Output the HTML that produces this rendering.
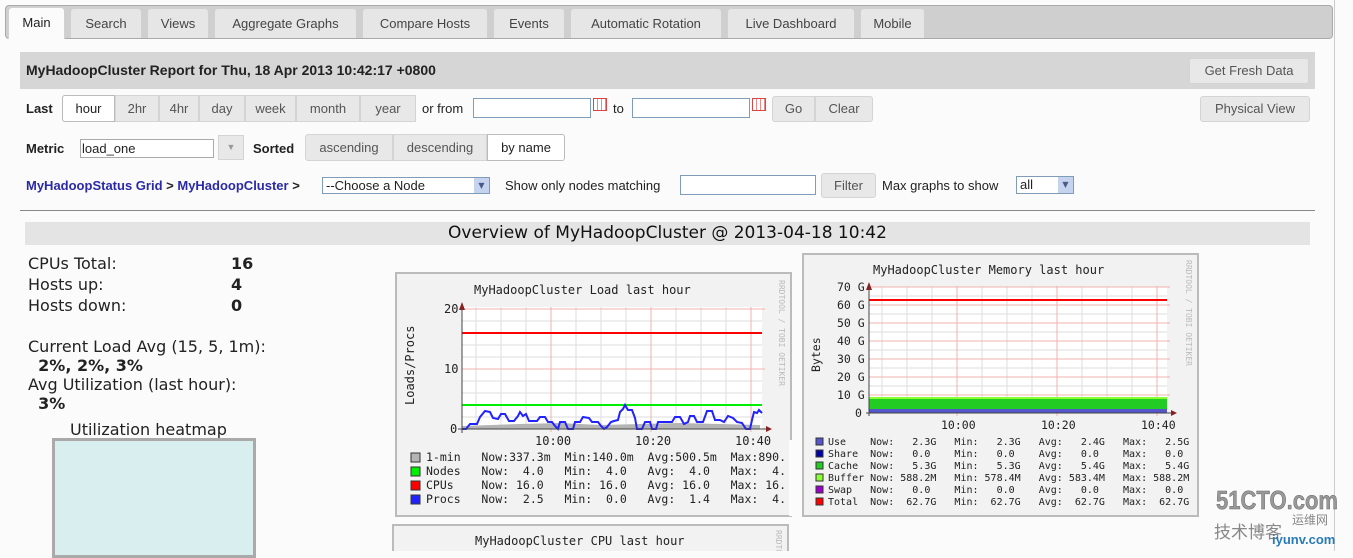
<!DOCTYPE html>
<html><head><meta charset="utf-8"><style>
*{box-sizing:border-box}
body{margin:0;width:1353px;height:551px;overflow:hidden;background:#fbfbfb;font-family:"DejaVu Sans","Liberation Sans",sans-serif;font-size:13px;color:#222;position:relative}
.a{position:absolute;white-space:nowrap}
.tabbar{left:5px;top:5px;width:1328px;height:34px;background:#cfcfcf;border:1px solid #aaa;border-radius:4px}
.tab{position:absolute;top:8px;height:30px;background:#e6e6e6;border:1px solid #d0d0d0;border-bottom:none;border-radius:4px 4px 0 0;font-size:13px;color:#444;text-align:center;line-height:29px;font-family:"Liberation Sans",sans-serif}
.tab.on{background:#fbfbfb;color:#222;top:7px;height:32px}
.btn{position:absolute;background:#e8e8e8;border:1px solid #d4d4d4;color:#555;text-align:center;font-family:"Liberation Sans",sans-serif;font-size:13px}
.inp{position:absolute;background:#fff;border:1px solid #7f9db9}
b{font-weight:bold}
.lk{color:#2a2aa8;font-weight:bold}
svg text{white-space:pre}
</style></head><body>
<div class="a tabbar"></div>
<div class="tab on" style="left:8px;width:57px">Main</div>
<div class="tab" style="left:70px;width:72px">Search</div>
<div class="tab" style="left:147px;width:62px">Views</div>
<div class="tab" style="left:214px;width:143px">Aggregate Graphs</div>
<div class="tab" style="left:362px;width:126px">Compare Hosts</div>
<div class="tab" style="left:493px;width:72px">Events</div>
<div class="tab" style="left:570px;width:152px">Automatic Rotation</div>
<div class="tab" style="left:727px;width:128px">Live Dashboard</div>
<div class="tab" style="left:860px;width:65px">Mobile</div>
<div class="a" style="left:1334px;top:0;width:1px;height:551px;background:#ccc"></div>

<div class="a" style="left:20px;top:52px;width:1295px;height:37px;background:#d6d6d6"></div>
<div class="a" style="left:26px;top:62px;font-size:14px;font-weight:bold;font-family:'Liberation Sans',sans-serif">MyHadoopCluster Report for Thu, 18 Apr 2013 10:42:17 +0800</div>
<div class="btn" style="left:1189px;top:58px;width:120px;height:26px;line-height:24px;border-radius:3px">Get Fresh Data</div>

<div class="a" style="left:26px;top:101px;font-weight:bold;font-family:'Liberation Sans',sans-serif;font-size:13px">Last</div>
<div class="btn" style="left:62px;top:95px;width:354px;height:27px;border-radius:3px"></div>
<div class="btn" style="left:62px;top:95px;width:53px;height:27px;line-height:25px;background:#fff;color:#222;border-color:#bbb;border-radius:3px 0 0 3px">hour</div>
<div class="btn" style="left:115px;top:95px;width:44px;height:27px;line-height:25px">2hr</div>
<div class="btn" style="left:159px;top:95px;width:40px;height:27px;line-height:25px">4hr</div>
<div class="btn" style="left:199px;top:95px;width:46px;height:27px;line-height:25px">day</div>
<div class="btn" style="left:245px;top:95px;width:51px;height:27px;line-height:25px">week</div>
<div class="btn" style="left:296px;top:95px;width:64px;height:27px;line-height:25px">month</div>
<div class="btn" style="left:360px;top:95px;width:56px;height:27px;line-height:25px">year</div>
<div class="a" style="left:422px;top:101px;font-family:'Liberation Sans',sans-serif">or from</div>
<div class="inp" style="left:473px;top:98px;width:118px;height:20px"></div>
<div class="a" style="left:593px;top:98px;width:14px;height:13px;border:1px solid #d44;background:repeating-linear-gradient(90deg,#fff 0 3px,#e88 3px 4px)"></div>
<div class="a" style="left:613px;top:101px;font-family:'Liberation Sans',sans-serif">to</div>
<div class="inp" style="left:632px;top:98px;width:118px;height:20px"></div>
<div class="a" style="left:752px;top:98px;width:14px;height:13px;border:1px solid #d44;background:repeating-linear-gradient(90deg,#fff 0 3px,#e88 3px 4px)"></div>
<div class="btn" style="left:772px;top:96px;width:43px;height:26px;line-height:24px;border-radius:3px 0 0 3px">Go</div>
<div class="btn" style="left:815px;top:96px;width:58px;height:26px;line-height:24px;border-radius:0 3px 3px 0">Clear</div>
<div class="btn" style="left:1200px;top:96px;width:110px;height:26px;line-height:24px;border-radius:3px">Physical View</div>

<div class="a" style="left:26px;top:141px;font-weight:bold;font-family:'Liberation Sans',sans-serif">Metric</div>
<div class="inp" style="left:80px;top:139px;width:134px;height:19px;border-color:#aaa;font-family:'Liberation Sans',sans-serif;padding-left:1px;line-height:17px">load_one</div>
<div class="btn" style="left:218px;top:135px;width:26px;height:25px;color:#999;font-size:9px;line-height:23px">▼</div>
<div class="a" style="left:253px;top:141px;font-weight:bold;font-family:'Liberation Sans',sans-serif">Sorted</div>
<div class="btn" style="left:305px;top:134px;width:88px;height:27px;line-height:25px;border-radius:3px 0 0 3px">ascending</div>
<div class="btn" style="left:393px;top:134px;width:94px;height:27px;line-height:25px">descending</div>
<div class="btn" style="left:487px;top:134px;width:78px;height:27px;line-height:25px;background:#fff;color:#222;border-color:#bbb;border-radius:0 3px 3px 0">by name</div>

<div class="a" style="left:26px;top:178px;font-family:'Liberation Sans',sans-serif"><span class="lk">MyHadoopStatus Grid</span> <b>&gt;</b> <span class="lk">MyHadoopCluster</span> <b>&gt;</b></div>
<div class="inp" style="left:322px;top:177px;width:168px;height:17px;font-family:'Liberation Sans',sans-serif;line-height:15px;padding-left:3px">--Choose a Node</div>
<div class="a" style="left:474px;top:178px;width:15px;height:15px;background:#c5d3ee;color:#4a5a8a;font-size:8px;text-align:center;line-height:15px">▼</div>
<div class="a" style="left:505px;top:178px;font-family:'Liberation Sans',sans-serif">Show only nodes matching</div>
<div class="inp" style="left:680px;top:175px;width:136px;height:20px"></div>
<div class="btn" style="left:821px;top:173px;width:55px;height:25px;line-height:23px;border-radius:3px">Filter</div>
<div class="a" style="left:882px;top:178px;font-family:'Liberation Sans',sans-serif">Max graphs to show</div>
<div class="inp" style="left:1016px;top:176px;width:58px;height:18px;font-family:'Liberation Sans',sans-serif;line-height:16px;padding-left:3px">all</div>
<div class="a" style="left:1058px;top:177px;width:15px;height:16px;background:#c5d3ee;color:#4a5a8a;font-size:8px;text-align:center;line-height:16px">▼</div>

<div class="a" style="left:20px;top:210px;width:1295px;height:1px;background:#888"></div>
<div class="a" style="left:25px;top:222px;width:1285px;height:23px;background:#e4e4e4"></div>
<div class="a" style="left:25px;top:223px;width:1285px;text-align:center;font-size:17px;color:#111">Overview of MyHadoopCluster @ 2013-04-18 10:42</div>

<div class="a" style="left:28px;top:253px;font-size:16px;line-height:21px">CPUs Total:<br>Hosts up:<br>Hosts down:</div>
<div class="a" style="left:231px;top:253px;font-size:16px;line-height:21px;font-weight:bold">16<br>4<br>0</div>
<div class="a" style="left:28px;top:337px;font-size:16px;line-height:19px">Current Load Avg (15, 5, 1m):<br>&nbsp;&nbsp;<b>2%, 2%, 3%</b><br>Avg Utilization (last hour):<br>&nbsp;&nbsp;<b>3%</b></div>
<div class="a" style="left:70px;top:420px;font-size:16px">Utilization heatmap</div>
<div class="a" style="left:52px;top:438px;width:204px;height:120px;border:3px solid #aaa;background:#d9eeee"></div>

<svg class="a" style="left:0;top:0" width="1353" height="551" font-family="DejaVu Sans Mono,Liberation Mono,monospace">
<!-- Load graph -->
<rect x="396" y="273" width="395" height="243" fill="#f2f2f2" stroke="#bbb" stroke-width="2"/>
<rect x="462" y="307" width="300" height="122" fill="#fff"/>
<g stroke="#ddd" stroke-width="1">
<line x1="462" y1="321" x2="762" y2="321"/><line x1="462" y1="333" x2="762" y2="333"/><line x1="462" y1="345" x2="762" y2="345"/><line x1="462" y1="357" x2="762" y2="357"/><line x1="462" y1="381" x2="762" y2="381"/><line x1="462" y1="393" x2="762" y2="393"/><line x1="462" y1="405" x2="762" y2="405"/><line x1="462" y1="417" x2="762" y2="417"/>
<line x1="476" y1="307" x2="476" y2="429"/><line x1="501" y1="307" x2="501" y2="429"/><line x1="526" y1="307" x2="526" y2="429"/><line x1="576" y1="307" x2="576" y2="429"/><line x1="601" y1="307" x2="601" y2="429"/><line x1="626" y1="307" x2="626" y2="429"/><line x1="676" y1="307" x2="676" y2="429"/><line x1="701" y1="307" x2="701" y2="429"/><line x1="726" y1="307" x2="726" y2="429"/>
</g>
<g stroke="#f3b0b0"><line x1="462" y1="309" x2="765" y2="309"/><line x1="462" y1="369" x2="765" y2="369"/><line x1="551" y1="307" x2="551" y2="432"/><line x1="651" y1="307" x2="651" y2="432"/><line x1="751" y1="307" x2="751" y2="432"/></g>
<path d="M462 429 L462 426 L520 424 L560 423 L600 425 L640 424 L680 423 L720 424 L760 425 L760 429Z" fill="#b4b4b4"/>
<line x1="462" y1="333" x2="762" y2="333" stroke="#f00" stroke-width="2"/>
<line x1="462" y1="405" x2="762" y2="405" stroke="#0e0" stroke-width="2"/>
<path d="M462 429 L466 429 L470 424 L477 424 L480 417 L485 411 L490 412 L493 418 L498 419 L501 414 L505 414 L509 421 L514 421 L518 416 L520 412 L523 416 L526 414 L529 421 L537 421 L540 417 L545 417 L548 422 L552 422 L555 426 L558 429 L560 422 L565 422 L568 429 L573 429 L575 422 L580 422 L583 417 L589 418 L592 422 L598 422 L601 426 L604 429 L607 427 L611 422 L614 421 L618 420 L620 412 L623 409 L625 405 L628 410 L632 410 L635 418 L637 429 L642 429 L645 422 L650 422 L652 429 L656 429 L658 422 L672 422 L675 417 L680 417 L684 424 L688 422 L690 416 L694 416 L697 422 L703 422 L707 411 L712 411 L715 420 L720 420 L724 422 L728 416 L733 418 L737 422 L742 423 L746 429 L750 429 L752 420 L754 412 L757 413 L759 410 L762 413" fill="none" stroke="#22f" stroke-width="2"/>
<line x1="462" y1="310" x2="462" y2="433" stroke="#444"/><line x1="458" y1="429" x2="767" y2="429" stroke="#444"/>
<path d="M459 310 L462 302 L465 310Z" fill="#822"/><path d="M766 426 L772 429 L766 432Z" fill="#822"/>
<g font-size="12" fill="#222">
<text x="474" y="294">MyHadoopCluster Load last hour</text>
<text x="444" y="313">20</text><text x="444" y="373">10</text><text x="450" y="433">0</text>
<text x="535" y="445">10:00</text><text x="635" y="445">10:20</text><text x="735" y="445">10:40</text>
<text transform="translate(414,405) rotate(-90)">Loads/Procs</text>
<text x="426" y="461" font-size="11.5">1-min   Now:337.3m  Min:140.0m  Avg:500.5m  Max:890.</text>
<text x="426" y="475" font-size="11.5">Nodes   Now:  4.0   Min:  4.0   Avg:  4.0   Max:  4.</text>
<text x="426" y="489" font-size="11.5">CPUs    Now: 16.0   Min: 16.0   Avg: 16.0   Max: 16.</text>
<text x="426" y="503" font-size="11.5">Procs   Now:  2.5   Min:  0.0   Avg:  1.4   Max:  4.</text>
</g>
<text transform="translate(779,280) rotate(90)" font-size="8" fill="#bbb">RRDTOOL / TOBI OETIKER</text>
<rect x="411" y="453" width="9" height="9" fill="#b4b4b4" stroke="#333"/>
<rect x="411" y="467" width="9" height="9" fill="#0e0" stroke="#333"/>
<rect x="411" y="481" width="9" height="9" fill="#f00" stroke="#333"/>
<rect x="411" y="495" width="9" height="9" fill="#22f" stroke="#333"/>
<rect x="789" y="440" width="4" height="76" fill="#fbfbfb"/>

<!-- Memory graph -->
<rect x="803" y="254" width="395" height="262" fill="#f2f2f2" stroke="#bbb" stroke-width="2"/>
<rect x="869" y="287" width="298" height="126" fill="#fff"/>
<g stroke="#ddd"><line x1="869" y1="296" x2="1167" y2="296"/><line x1="869" y1="314" x2="1167" y2="314"/><line x1="869" y1="332" x2="1167" y2="332"/><line x1="869" y1="350" x2="1167" y2="350"/><line x1="869" y1="368" x2="1167" y2="368"/><line x1="869" y1="386" x2="1167" y2="386"/><line x1="869" y1="404" x2="1167" y2="404"/>
<line x1="882" y1="287" x2="882" y2="413"/><line x1="907" y1="287" x2="907" y2="413"/><line x1="932" y1="287" x2="932" y2="413"/><line x1="982" y1="287" x2="982" y2="413"/><line x1="1007" y1="287" x2="1007" y2="413"/><line x1="1032" y1="287" x2="1032" y2="413"/><line x1="1082" y1="287" x2="1082" y2="413"/><line x1="1107" y1="287" x2="1107" y2="413"/><line x1="1132" y1="287" x2="1132" y2="413"/></g>
<g stroke="#f3b0b0"><line x1="869" y1="287" x2="1170" y2="287"/><line x1="869" y1="305" x2="1170" y2="305"/><line x1="869" y1="323" x2="1170" y2="323"/><line x1="869" y1="341" x2="1170" y2="341"/><line x1="869" y1="359" x2="1170" y2="359"/><line x1="869" y1="377" x2="1170" y2="377"/><line x1="869" y1="395" x2="1170" y2="395"/><line x1="957" y1="286" x2="957" y2="416"/><line x1="1057" y1="286" x2="1057" y2="416"/><line x1="1157" y1="286" x2="1157" y2="416"/></g>
<rect x="869" y="397" width="298" height="2" fill="#8f3"/>
<rect x="869" y="399" width="298" height="10" fill="#2c2"/>
<rect x="869" y="409" width="298" height="4" fill="#55c"/>
<line x1="869" y1="300" x2="1167" y2="300" stroke="#f00" stroke-width="2"/>
<line x1="869" y1="289" x2="869" y2="416" stroke="#444"/><line x1="866" y1="413" x2="1172" y2="413" stroke="#444"/>
<path d="M866 290 L869 282 L872 290Z" fill="#822"/><path d="M1171 410 L1177 413 L1171 416Z" fill="#822"/>
<g font-size="11.5" fill="#222">
<text x="873" y="274" font-size="12">MyHadoopCluster Memory last hour</text>
<text x="837" y="291">70 G</text><text x="837" y="309">60 G</text><text x="837" y="327">50 G</text><text x="837" y="345">40 G</text><text x="837" y="363">30 G</text><text x="837" y="381">20 G</text><text x="837" y="399">10 G</text><text x="855" y="417">0</text>
<text x="941" y="429">10:00</text><text x="1041" y="429">10:20</text><text x="1141" y="429">10:40</text>
<text transform="translate(820,372) rotate(-90)">Bytes</text>
<g font-size="10"><text x="828" y="445">Use    Now:   2.3G   Min:   2.3G   Avg:   2.4G   Max:   2.5G</text>
<text x="828" y="457">Share  Now:   0.0    Min:   0.0    Avg:   0.0    Max:   0.0</text>
<text x="828" y="469">Cache  Now:   5.3G   Min:   5.3G   Avg:   5.4G   Max:   5.4G</text>
<text x="828" y="481">Buffer Now: 588.2M   Min: 578.4M   Avg: 583.4M   Max: 588.2M</text>
<text x="828" y="493">Swap   Now:   0.0    Min:   0.0    Avg:   0.0    Max:   0.0</text>
<text x="828" y="505">Total  Now:  62.7G   Min:  62.7G   Avg:  62.7G   Max:  62.7G</text></g>
</g>
<text transform="translate(1186,260) rotate(90)" font-size="8" fill="#bbb">RRDTOOL / TOBI OETIKER</text>
<rect x="816" y="438" width="7" height="7" fill="#55c" stroke="#333"/>
<rect x="816" y="450" width="7" height="7" fill="#00a" stroke="#333"/>
<rect x="816" y="462" width="7" height="7" fill="#2c2" stroke="#333"/>
<rect x="816" y="474" width="7" height="7" fill="#8f3" stroke="#333"/>
<rect x="816" y="486" width="7" height="7" fill="#90c" stroke="#333"/>
<rect x="816" y="498" width="7" height="7" fill="#f00" stroke="#333"/>

<!-- CPU graph -->
<rect x="393" y="525" width="395" height="40" fill="#f2f2f2" stroke="#bbb" stroke-width="2"/>
<text x="475" y="545" font-size="12" fill="#222">MyHadoopCluster CPU last hour</text>
<text transform="translate(776,530) rotate(90)" font-size="8" fill="#bbb">RRDTOOL</text>

<!-- watermark -->
<text x="1216" y="509" font-family="Liberation Sans,sans-serif" font-weight="bold" font-size="26" fill="#999" stroke="#666" stroke-width="0.5" textLength="122" lengthAdjust="spacingAndGlyphs">51CTO.com</text>
<text x="1214" y="538" font-family="Noto Sans CJK SC,sans-serif" font-size="17" fill="#888">技术博客</text>
<text x="1292" y="524" font-family="Noto Sans CJK SC,sans-serif" font-size="12" fill="#888">运维网</text>
<text x="1272" y="544" font-family="Liberation Sans,sans-serif" font-weight="bold" font-size="13" fill="#2a7ab8">iyunv.com</text>
</svg>
</body></html>
